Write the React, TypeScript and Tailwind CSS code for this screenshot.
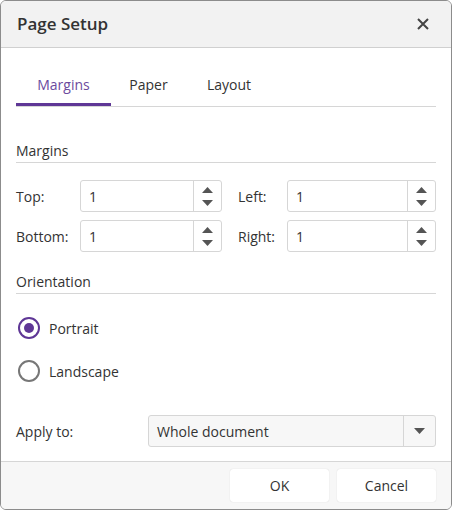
import type { ReactNode } from 'react';

const font = { fontFamily: '"Open Sans", "Noto Sans", sans-serif' };

const Spinner = ({ value }: { value: string }) => (
  <div className="flex h-8 flex-1 overflow-hidden rounded-[3px] border border-[#d6d6d6] bg-white">
    <div className="flex flex-1 items-center px-2 text-[14px] text-[#333]">{value}</div>
    <div className="flex w-7 flex-col items-center justify-center gap-[7px] border-l border-[#d6d6d6]">
      <svg width="11" height="6" viewBox="0 0 11 6">
        <path d="M0 6 L5.5 0 L11 6Z" fill="#555" />
      </svg>
      <svg width="11" height="6" viewBox="0 0 11 6">
        <path d="M0 0 L5.5 6 L11 0Z" fill="#555" />
      </svg>
    </div>
  </div>
);

const Field = ({
  label,
  labelWidth,
  value,
  className,
}: {
  label: string;
  labelWidth: string;
  value: string;
  className: string;
}) => (
  <div className={`flex items-center ${className}`}>
    <span className={`${labelWidth} text-[14px] text-[#333]`}>{label}</span>
    <Spinner value={value} />
  </div>
);

const Section = ({ title, children }: { title: string; children: ReactNode }) => (
  <div>
    <div className="border-b border-[#d6d6d6] pb-[1px] text-[14px] text-[#333]">{title}</div>
    {children}
  </div>
);

const Radio = ({ label, checked }: { label: string; checked?: boolean }) => (
  <div className="flex items-center gap-[9px]">
    <span
      className={`flex h-[22px] w-[22px] items-center justify-center rounded-full border-2 ${
        checked ? 'border-[#5f3796]' : 'border-[#777]'
      }`}
    >
      {checked && <span className="h-[10px] w-[10px] rounded-full bg-[#5f3796]" />}
    </span>
    <span className="text-[14px] text-[#333]">{label}</span>
  </div>
);

export default function App() {
  return (
    <div className="h-[510px] w-[452px] bg-white" style={font}>
      <div className="flex h-full flex-col overflow-hidden rounded-[6px] border border-[#8c8c8c]">
        <div className="flex h-[47px] items-center justify-between border-b border-[#d0d0d0] bg-[#f2f2f2] pl-4 pr-[22px]">
          <span className="text-[17px] font-semibold text-[#333]">Page Setup</span>
          <svg width="12" height="12" viewBox="0 0 12 12">
            <path d="M1 1 L11 11 M11 1 L1 11" stroke="#444" strokeWidth="2" />
          </svg>
        </div>

        <div className="flex flex-1 flex-col px-[15px]">
          <div className="mt-[26px] flex border-b border-[#d6d6d6]">
            <div className="w-[95px] border-b-[3px] border-[#5f3796] pb-[8px] text-center text-[14px] text-[#6b4a9e]">
              Margins
            </div>
            <div className="w-[75px] pb-[8px] text-center text-[14px] text-[#333]">Paper</div>
            <div className="w-[86px] pb-[8px] text-center text-[14px] text-[#333]">Layout</div>
          </div>

          <div className="mt-[33px]">
            <Section title="Margins">
              <div className="mt-[17px] flex flex-col gap-2">
                <div className="flex">
                  <Field className="w-[206px]" label="Top:" labelWidth="w-[64px]" value="1" />
                  <Field className="ml-4 flex-1" label="Left:" labelWidth="w-[49px]" value="1" />
                </div>
                <div className="flex">
                  <Field className="w-[206px]" label="Bottom:" labelWidth="w-[64px]" value="1" />
                  <Field className="ml-4 flex-1" label="Right:" labelWidth="w-[49px]" value="1" />
                </div>
              </div>
            </Section>
          </div>

          <div className="mt-[19px]">
            <Section title="Orientation">
              <div className="mt-[23px] flex flex-col gap-[21px] pl-[2px]">
                <Radio label="Portrait" checked />
                <Radio label="Landscape" />
              </div>
            </Section>
          </div>

          <div className="mt-[33px] flex items-center">
            <span className="w-[132px] text-[14px] text-[#333]">Apply to:</span>
            <div className="flex h-8 flex-1 overflow-hidden rounded-[3px] border border-[#d6d6d6] bg-[#f7f7f7]">
              <div className="flex flex-1 items-center px-2 text-[14px] text-[#333]">Whole document</div>
              <div className="flex w-8 items-center justify-center border-l border-[#d6d6d6]">
                <svg width="11" height="6" viewBox="0 0 11 6">
                  <path d="M0 0 L5.5 6 L11 0Z" fill="#555" />
                </svg>
              </div>
            </div>
          </div>
        </div>

        <div className="flex h-[48px] items-center justify-end gap-2 border-t border-[#d6d6d6] bg-[#f7f7f7] pr-[15px]">
          <button className="h-[33px] w-[99px] rounded-[3px] bg-white text-[14px] text-[#333] shadow-[0_0_1px_rgba(0,0,0,0.2)]">
            OK
          </button>
          <button className="h-[33px] w-[99px] rounded-[3px] bg-white text-[14px] text-[#333] shadow-[0_0_1px_rgba(0,0,0,0.2)]">
            Cancel
          </button>
        </div>
      </div>
    </div>
  );
}
